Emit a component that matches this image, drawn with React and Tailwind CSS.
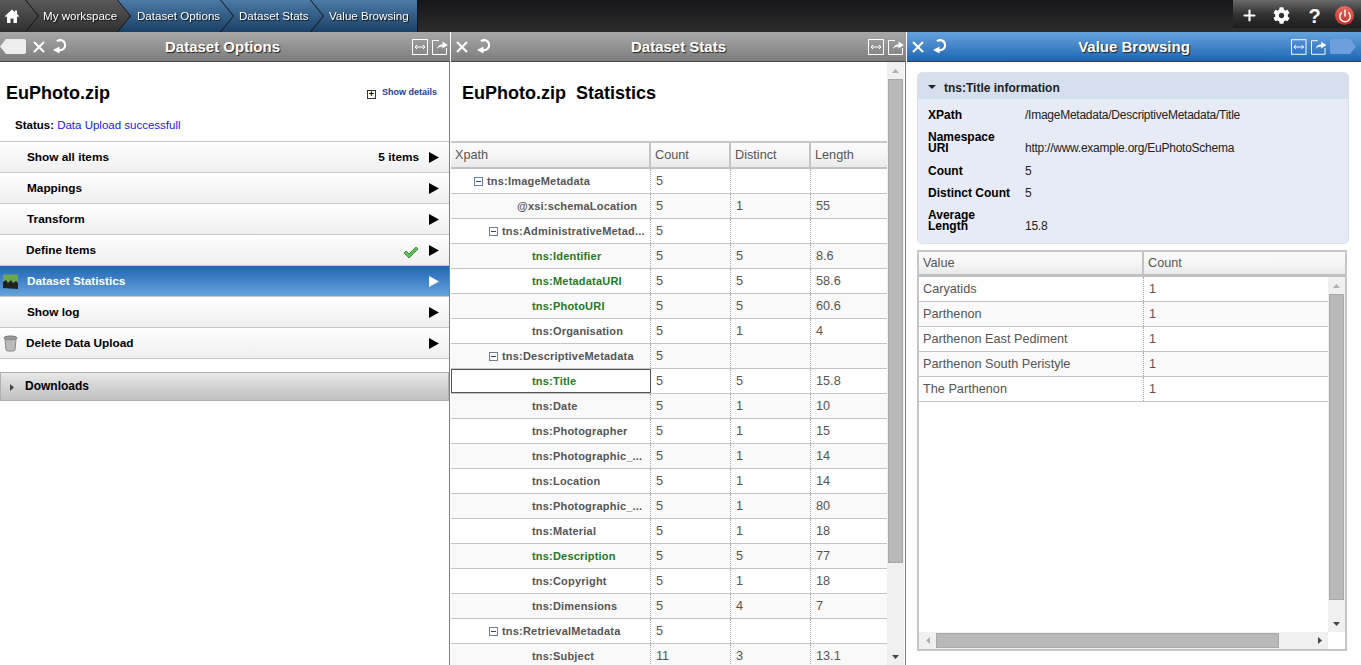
import React from 'react';
import {Plus, Power} from 'lucide-react';
import {FaCog} from 'react-icons/fa';

const menuItems = [
  {label: 'Show all items', right: '5 items', indent: 'pl-[27px]'},
  {label: 'Mappings', indent: 'pl-[27px]'},
  {label: 'Transform', indent: 'pl-[27px]'},
  {label: 'Define Items', check: true, indent: 'pl-[26px]'},
  {label: 'Dataset Statistics', active: true, icon: 'chart', indent: 'pl-[3px]'},
  {label: 'Show log', indent: 'pl-[27px]'},
  {label: 'Delete Data Upload', icon: 'trash', indent: 'pl-[3px]'},
];

const statRows = [
  {name: 'tns:ImageMetadata', pad: 'pl-[23px]', tree: true, count: '5'},
  {name: '@xsi:schemaLocation', pad: 'pl-[66px]', count: '5', distinct: '1', length: '55', alt: true},
  {name: 'tns:AdministrativeMetad...', pad: 'pl-[38px]', tree: true, count: '5'},
  {name: 'tns:Identifier', pad: 'pl-[81px]', green: true, count: '5', distinct: '5', length: '8.6', alt: true},
  {name: 'tns:MetadataURI', pad: 'pl-[81px]', green: true, count: '5', distinct: '5', length: '58.6'},
  {name: 'tns:PhotoURI', pad: 'pl-[81px]', green: true, count: '5', distinct: '5', length: '60.6', alt: true},
  {name: 'tns:Organisation', pad: 'pl-[81px]', count: '5', distinct: '1', length: '4'},
  {name: 'tns:DescriptiveMetadata', pad: 'pl-[38px]', tree: true, count: '5', alt: true},
  {name: 'tns:Title', pad: 'pl-[81px]', green: true, selected: true, count: '5', distinct: '5', length: '15.8'},
  {name: 'tns:Date', pad: 'pl-[81px]', count: '5', distinct: '1', length: '10', alt: true},
  {name: 'tns:Photographer', pad: 'pl-[81px]', count: '5', distinct: '1', length: '15'},
  {name: 'tns:Photographic_...', pad: 'pl-[81px]', count: '5', distinct: '1', length: '14', alt: true},
  {name: 'tns:Location', pad: 'pl-[81px]', count: '5', distinct: '1', length: '14'},
  {name: 'tns:Photographic_...', pad: 'pl-[81px]', count: '5', distinct: '1', length: '80', alt: true},
  {name: 'tns:Material', pad: 'pl-[81px]', count: '5', distinct: '1', length: '18'},
  {name: 'tns:Description', pad: 'pl-[81px]', green: true, count: '5', distinct: '5', length: '77', alt: true},
  {name: 'tns:Copyright', pad: 'pl-[81px]', count: '5', distinct: '1', length: '18'},
  {name: 'tns:Dimensions', pad: 'pl-[81px]', count: '5', distinct: '4', length: '7', alt: true},
  {name: 'tns:RetrievalMetadata', pad: 'pl-[38px]', tree: true, count: '5'},
  {name: 'tns:Subject', pad: 'pl-[81px]', count: '11', distinct: '3', length: '13.1', alt: true},
];

const valueRows = ['Caryatids', 'Parthenon', 'Parthenon East Pediment', 'Parthenon South Peristyle', 'The Parthenon'];

const infoRows = [
  {label: 'XPath', value: '/ImageMetadata/DescriptiveMetadata/Title', h: 'h-[22px]'},
  {label: 'Namespace URI', value: 'http://www.example.org/EuPhotoSchema', h: 'h-[34px]', two: true},
  {label: 'Count', value: '5', h: 'h-[22px]'},
  {label: 'Distinct Count', value: '5', h: 'h-[22px]'},
  {label: 'Average Length', value: '15.8', h: 'h-[34px]', two: true},
];

const CloseIcon = () => (
  <svg width="12" height="12" viewBox="0 0 12 12" fill="none">
    <path d="M1 1l10 10M11 1 1 11" stroke="#fff" strokeWidth="2" />
  </svg>
);

const RefreshIcon = () => (
  <svg width="14" height="15" viewBox="0 0 14 15" fill="none">
    <path d="M5 2.200A5 5 0 1 1 7 11" stroke="#fff" strokeWidth="2.200" />
    <path d="M7.500 7.500 1 11l6.500 3.500z" fill="#fff" />
  </svg>
);

const ExpandIcon = () => (
  <svg width="16" height="16" viewBox="0 0 16 16" fill="none">
    <rect x="0.500" y="0.500" width="15" height="15" stroke="#fff" />
    <path d="M3 8h10M5 6 3 8l2 2M11 6l2 2-2 2" stroke="#fff" />
  </svg>
);

const ShareIcon = () => (
  <svg width="16" height="17" viewBox="0 0 16 17" fill="none">
    <path d="M7 2.500H.500v14h14V10" stroke="#fff" />
    <path d="M5 11c.5-3 2.500-4.500 5.500-4.500V3.500L15.800 7l-5.300 3.500V8.500c-2.500 0-4 .7-5.500 2.500z" fill="#fff" />
  </svg>
);

const HomeIcon = () => (
  <svg width="14" height="14" viewBox="0 0 14 14">
    <path d="M7 .500 0 7l1 1.200 1-.9V14h3.500V9.500h3V14H12V7.300l1 .9L14 7l-2-1.900V1.500h-2v1.700z" fill="#fff" />
  </svg>
);

const PanelHeader = ( {title, blue, left, right, leftClass, titleClass, rightClass} ) => (
  <div className={`flex items-center h-[30px] shrink-0 border-b ${blue ? 'bg-gradient-to-b from-[#66a3dd] to-[#1c66b4] border-[#3c3c3c]' : 'bg-gradient-to-b from-[#a8a8a8] to-[#7d7d7d] border-[#4a4a4a]'}`}>
    <div className={`flex items-center w-[70px] shrink-0 ${leftClass}`}>{left}</div>
    <div className={`flex-1 text-center text-white font-bold text-[15px] pt-[1px] [text-shadow:1px_1px_1px_#222] ${titleClass}`}>{title}</div>
    <div className={`flex items-center justify-end gap-[4px] w-[70px] shrink-0 ${rightClass}`}>{right}</div>
  </div>
);

const TreeToggle = () => (
  <span className="inline-flex items-center justify-center w-[9px] h-[9px] border border-[#6f8093] mr-[4px] shrink-0">
    <span className="w-[5px] h-px bg-[#33475c]" />
  </span>
);

const ColHead = ( {children, className} ) => (
  <div className={`flex items-center pl-[4px] pt-[1px] text-[12.700px] text-[#555] ${className}`}>{children}</div>
);

const Cell = ( {children, className} ) => (
  <div className={`flex items-center h-full pt-[1px] text-[12.700px] text-[#555] ${className}`}>{children}</div>
);

const Crumb = ( {children, z, shape, gradient, className} ) => (
  <div className={`flex drop-shadow-[1px_0_0_#111] ${z} ${className}`}>
    <div className={`flex items-center h-full bg-gradient-to-b ${gradient} ${shape}`}>{children}</div>
  </div>
);

function TopBar () {
  return (
    <div className="flex justify-between h-[32px] shrink-0 bg-gradient-to-b from-[#17171a] to-[#2c2c2c]">
      <div className="flex text-[11.600px] text-white [text-shadow:1px_1px_1px_#111]">
        <Crumb z="z-40" gradient="from-[#5a5a5a] to-[#303030]" shape="w-[38px] pl-[5px] [clip-path:polygon(0_0,25px_0,38px_50%,25px_100%,0_100%)]">
          <HomeIcon />
        </Crumb>
        <Crumb z="z-30" className="-ml-[13px]" gradient="from-[#5a5a5a] to-[#303030]" shape="w-[105px] pl-[18px] [clip-path:polygon(0_0,92px_0,105px_50%,92px_100%,0_100%)]">
          My workspace
        </Crumb>
        <Crumb z="z-20" className="-ml-[13px]" gradient="from-[#4c7ba6] to-[#1a4166]" shape="w-[116px] pl-[20px] [clip-path:polygon(0_0,103px_0,116px_50%,103px_100%,0_100%)]">
          Dataset Options
        </Crumb>
        <Crumb z="z-10" className="-ml-[13px]" gradient="from-[#4c7ba6] to-[#1a4166]" shape="w-[103px] pl-[19px] [clip-path:polygon(0_0,90px_0,103px_50%,90px_100%,0_100%)]">
          Dataset Stats
        </Crumb>
        <Crumb z="z-0" className="-ml-[15px]" gradient="from-[#4c7ba6] to-[#1a4166]" shape="w-[109px] pl-[21px]">
          Value Browsing
        </Crumb>
      </div>
      <div className="flex items-start w-[128px] h-[28px] pl-[8px] pt-[7px] bg-gradient-to-b from-[#6a6a6a] via-[#333] to-[#1c1c1c]">
        <Plus size={17} color="#fff" strokeWidth={3} />
        <FaCog size={17} color="#fff" className="ml-[15px]" />
        <span className="w-[17px] ml-[16px] text-center text-white font-bold text-[20px] leading-[18px]">?</span>
        <span className="flex items-center justify-center w-[19px] h-[19px] ml-[12px] -mt-[1px] rounded-full bg-gradient-to-b from-[#ea6a5e] to-[#c4281f]">
          <Power size={14} color="#fff" strokeWidth={2.5} />
        </span>
      </div>
    </div>
  );
}

function MenuIcon ( {type} ) {
  if ( type === 'chart' ) {
    return (
      <svg width="15" height="15" viewBox="0 0 15 15" className="mr-[9px]">
        <rect y="0.500" width="15" height="13" fill="#6aa84f" />
        <path d="M0 14V8l3-2 2 3 3-3 2 3 3-2 2 2v6z" fill="#222" />
      </svg>
    );
  }
  if ( type === 'trash' ) {
    return (
      <svg width="15" height="17" viewBox="0 0 15 17" className="mr-[8px]">
        <ellipse cx="7.500" cy="3" rx="6.500" ry="2" fill="#999" stroke="#777" />
        <path d="M2 4l1 11c1 1.500 8 1.500 9 0l1-11c-2 1-9 1-11 0z" fill="#bbb" stroke="#888" />
      </svg>
    );
  }
  return null;
}

function OptionsPanel () {
  return (
    <div className="flex flex-col w-[451px] shrink-0 pr-px">
      <PanelHeader
        title="Dataset Options"
        leftClass="gap-[7px]"
        titleClass="pr-[5px]"
        rightClass="pr-[2px]"
        left={<>
          <span className="w-[26px] h-[15px] bg-[#eee] rounded-r-[2px] [clip-path:polygon(6px_0,100%_0,100%_100%,6px_100%,0_50%)]" />
          <CloseIcon />
          <RefreshIcon />
        </>}
        right={<><ExpandIcon /><ShareIcon /></>}
      />
      <div className="flex-1 min-h-0 border-r border-[#808080]">
        <div className="flex justify-between pl-[6px] pr-[12px] pt-[20px] h-[48px]">
          <h1 className="text-[18px] font-bold text-black leading-[22px]">EuPhoto.zip</h1>
          <div className="flex items-start pt-[3px] text-[9px] leading-[14px] font-bold text-[#1c3f94]">
            <span className="flex items-center justify-center w-[9px] h-[9px] mt-[5px] mr-[6px] border border-[#333] text-black text-[9px] leading-none">+</span>
            Show details
          </div>
        </div>
        <div className="pl-[15px] pt-[6px] h-[31px] text-[11.500px] leading-[18px]">
          <b className="text-black">Status: </b><span className="text-[#1a1ae0]">Data Upload successfull</span>
        </div>
        <div className="border-t border-[#c8c8c8]">
          {menuItems.map( item => (
            <div
              key={item.label}
              className={`flex items-center h-[31px] border-b border-[#c8c8c8] text-[11.800px] font-bold pr-[10px] ${item.indent} ${item.active ? 'bg-gradient-to-b from-[#1c66b4] to-[#66a3dd] text-white' : 'bg-gradient-to-b from-white to-[#efefef] text-black'}`}
            >
              {item.icon && <MenuIcon type={item.icon} />}
              <span className="flex-1 mt-[1px]">{item.label}</span>
              {item.right && <span className="mr-[10px] mt-[1px]">{item.right}</span>}
              {item.check && (
                <svg width="16" height="13" viewBox="0 0 16 13" className="mr-[10px] mt-[5px]">
                  <path d="M1 7l2-2 3 3 7-7 2 2-9 9z" fill="#5cc455" stroke="#2c7d2a" strokeWidth="0.800" />
                </svg>
              )}
              <svg width="10" height="11" viewBox="0 0 10 11" className="mt-[1px]"><path d="M0 0l10 5.500L0 11z" fill={item.active ? '#fff' : '#000'} /></svg>
            </div>
          ) )}
        </div>
        <div className="flex items-center h-[29px] mt-[13px] pl-[9px] border border-[#b0b0b0] bg-gradient-to-b from-[#e8e8e8] to-[#c0c0c0] text-[12px] font-bold text-black">
          <svg width="4" height="7" viewBox="0 0 4 7" className="mr-[11px] mt-[2px]"><path d="M0 0l4 3.500L0 7z" fill="#444" /></svg>
          <span className="-mt-[2px]">Downloads</span>
        </div>
      </div>
    </div>
  );
}

function StatsPanel () {
  return (
    <div className="flex flex-col w-[456px] shrink-0 pr-px overflow-hidden">
      <PanelHeader
        title="Dataset Stats"
        leftClass="pl-[5px] gap-[8px]"
        rightClass="pr-[2px]"
        left={<><CloseIcon /><RefreshIcon /></>}
        right={<><ExpandIcon /><ShareIcon /></>}
      />
      <div className="flex flex-1 min-h-0 border-r border-[#808080]">
        <div className="w-[436px] shrink-0 overflow-hidden">
          <h1 className="pl-[11px] pt-[20px] h-[79px] text-[18px] font-bold text-black leading-[22px] whitespace-pre">EuPhoto.zip  Statistics</h1>
          <div className="flex h-[28px] border-t-2 border-b-2 border-t-[#c8c8c8] border-b-[#c0c0c0] bg-gradient-to-b from-[#fbfbfb] via-[#f6f6f6] to-[#e9eaec]">
            <ColHead className="w-[200px] border-r-2 border-[#c4c4c4]">Xpath</ColHead>
            <ColHead className="w-[80px] border-r-2 border-[#c4c4c4]">Count</ColHead>
            <ColHead className="w-[80px] border-r-2 border-[#c4c4c4]">Distinct</ColHead>
            <ColHead className="flex-1">Length</ColHead>
          </div>
          {statRows.map( ( row, i ) => (
            <div key={`${row.name}${i}`} className={`flex h-[25px] border-b border-[#c4c4c4] ${row.alt ? 'bg-[#f9f9f9]' : 'bg-white'}`}>
              <div className={`flex items-center w-[200px] h-full text-[11px] font-bold tracking-[0.2px] ${row.pad} ${row.green ? 'text-[#1f7a1f]' : 'text-[#555]'} ${row.selected ? 'outline outline-[#555] -outline-offset-1' : 'border-r border-dotted border-[#aaa]'}`}>
                {row.tree && <TreeToggle />}
                <span className="whitespace-nowrap">{row.name}</span>
              </div>
              <Cell className="w-[80px] pl-[5px] border-r border-dotted border-[#aaa]">{row.count}</Cell>
              <Cell className="w-[80px] pl-[5px] border-r border-dotted border-[#aaa]">{row.distinct}</Cell>
              <Cell className="flex-1 pl-[5px]">{row.length}</Cell>
            </div>
          ) )}
        </div>
        <div className="flex flex-col w-[17px] shrink-0 bg-[#f0f0f0]">
          <div className="flex items-center justify-center h-[17px]">
            <svg width="7" height="4" viewBox="0 0 7 4"><path d="M3.500 0 7 4H0z" fill="#b0b0b0" /></svg>
          </div>
          <div className="h-[484px] mx-[1px] bg-[#b9b9b9] border border-[#a8a8a8]" />
          <div className="flex-1" />
          <div className="flex items-center justify-center h-[17px]">
            <svg width="7" height="4" viewBox="0 0 7 4"><path d="M3.500 4 7 0H0z" fill="#444" /></svg>
          </div>
        </div>
      </div>
    </div>
  );
}

function ValuePanel () {
  return (
    <div className="flex flex-col flex-1 min-w-0">
      <PanelHeader
        blue
        title="Value Browsing"
        leftClass="pl-[5px] gap-[8px]"
        rightClass="pr-[5px]"
        left={<><CloseIcon /><RefreshIcon /></>}
        right={<>
          <ExpandIcon /><ShareIcon />
          <span className="w-[26px] h-[15px] shrink-0 bg-[#6c9fdb] rounded-l-[2px] [clip-path:polygon(0_0,20px_0,100%_50%,20px_100%,0_100%)]" />
        </>}
      />
      <div className="flex flex-col flex-1 min-h-0 pl-[10px] pr-[12px] pt-[10px] pb-[14px]">
        <div className="h-[172px] shrink-0 rounded-[5px] border border-[#dbe2ef] bg-[#e6ebf5] overflow-hidden">
          <div className="flex items-center h-[26px] pl-[10px] pt-[3px] bg-[#d6dfee] text-[12px] font-bold text-[#222]">
            <svg width="8" height="4" viewBox="0 0 8 4" className="mr-[8px] -mt-[2px]"><path d="M0 0h8L4 4z" fill="#222" /></svg>
            tns:Title information
          </div>
          <div className="pl-[10px] pt-[5px]">
            {infoRows.map( row => (
              <div key={row.label} className={`flex ${row.h} items-center text-[12px]`}>
                <b className={`w-[97px] shrink-0 text-black leading-[11px] ${row.two ? 'pr-[30px]' : ''}`}>{row.label}</b>
                <span className={`text-[#222] tracking-[-0.250px] ${row.two ? 'pt-[10px]' : ''}`}>{row.value}</span>
              </div>
            ) )}
          </div>
        </div>
        <div className="flex flex-col flex-1 min-h-0 mt-[6px] w-[430px] border-2 border-[#c6c6c6]">
          <div className="flex h-[25px] shrink-0 border-b-[3px] border-[#c0c0c0] bg-gradient-to-b from-[#fbfbfb] via-[#f6f6f6] to-[#e8e9ea]">
            <ColHead className="w-[225px] border-r-2 border-[#c4c4c4]">Value</ColHead>
            <ColHead className="flex-1">Count</ColHead>
          </div>
          <div className="flex flex-1 min-h-0">
            <div className="flex-1 min-w-0">
              {valueRows.map( ( value, i ) => (
                <div key={value} className={`flex h-[25px] border-b border-[#c4c4c4] ${i % 2 ? 'bg-[#f9f9f9]' : 'bg-white'}`}>
                  <Cell className="w-[225px] pl-[4px] border-r border-dotted border-[#aaa]">{value}</Cell>
                  <Cell className="flex-1 pl-[5px]">1</Cell>
                </div>
              ) )}
            </div>
            <div className="flex flex-col w-[17px] shrink-0 bg-[#f0f0f0]">
              <div className="flex items-center justify-center h-[17px]">
                <svg width="7" height="4" viewBox="0 0 7 4"><path d="M3.500 0 7 4H0z" fill="#b0b0b0" /></svg>
              </div>
              <div className="h-[306px] mx-[1px] bg-[#b9b9b9] border border-[#a8a8a8]" />
              <div className="flex-1" />
              <div className="flex items-center justify-center h-[17px]">
                <svg width="7" height="4" viewBox="0 0 7 4"><path d="M3.500 4 7 0H0z" fill="#444" /></svg>
              </div>
            </div>
          </div>
          <div className="flex items-center h-[17px] shrink-0 bg-white">
            <div className="flex flex-1 items-center h-full bg-[#f0f0f0]">
              <div className="flex items-center justify-center w-[17px]">
                <svg width="4" height="7" viewBox="0 0 4 7"><path d="M4 0 0 3.500 4 7z" fill="#b0b0b0" /></svg>
              </div>
              <div className="w-[343px] h-[15px] bg-[#b9b9b9] border border-[#a8a8a8]" />
              <div className="flex flex-1 justify-end pr-[6px]">
                <svg width="4" height="7" viewBox="0 0 4 7"><path d="M0 0l4 3.500L0 7z" fill="#444" /></svg>
              </div>
            </div>
            <div className="w-[17px] shrink-0" />
          </div>
        </div>
      </div>
    </div>
  );
}

export default function App () {
  return (
    <div className="flex flex-col h-[665px] w-[1361px] overflow-hidden bg-white font-['Liberation_Sans',Arial,sans-serif]">
      <TopBar />
      <div className="flex flex-1 min-h-0">
        <OptionsPanel />
        <StatsPanel />
        <ValuePanel />
      </div>
    </div>
  );
}
